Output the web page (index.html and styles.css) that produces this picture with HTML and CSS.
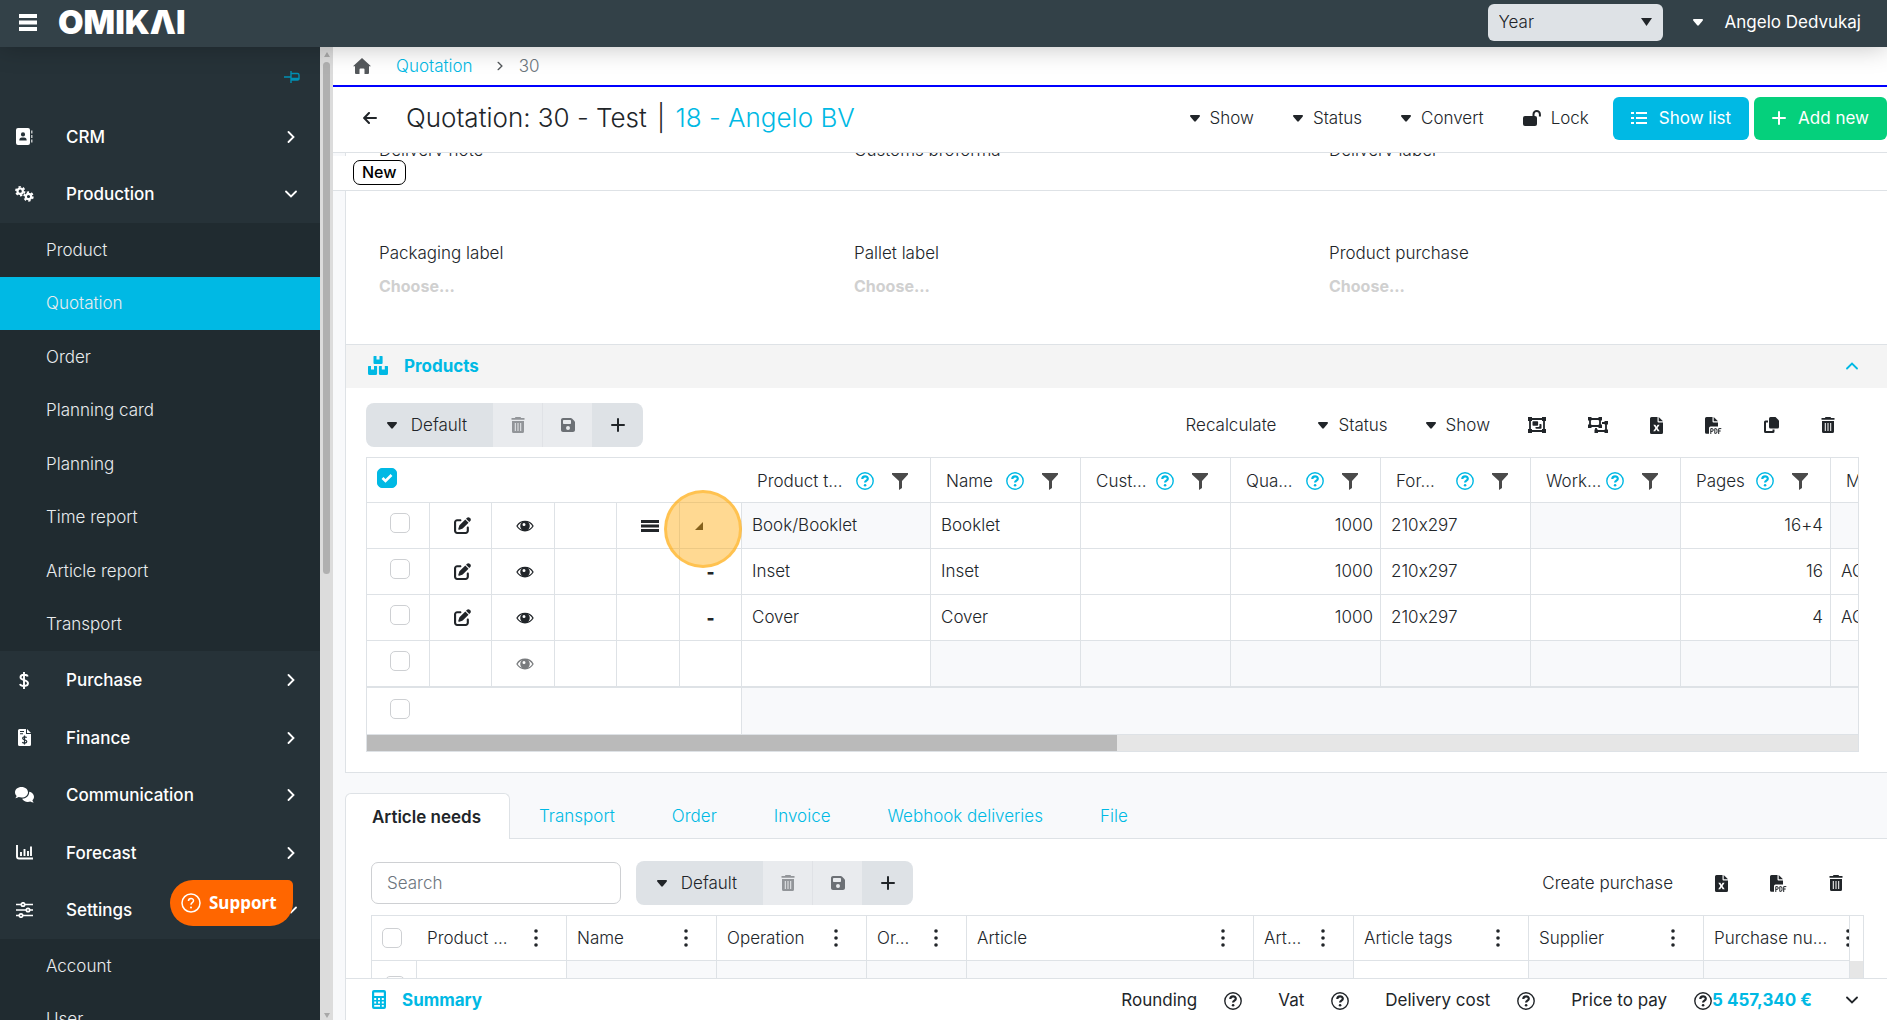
FILE: index.html
```html
<!DOCTYPE html>
<html lang="en">
<head>
  <meta charset="UTF-8">
  <title>Quotation</title>
  <link rel="stylesheet" href="styles.css">
</head>
<body>
  <!-- icon set -->
  <svg class="icon-defs" aria-hidden="true">
    <symbol id="i-caret" viewBox="0 0 10 7"><path d="M1 0h8q1.600 0.400 .6 1.700L5.800 6.300q-.8.800-1.600 0L.4 1.700Q-.6.400 1 0z"/></symbol>
    <symbol id="i-right" viewBox="0 0 8 12"><path d="M1.500 1l5 5-5 5" fill="none" stroke="currentColor" stroke-width="1.800" stroke-linecap="round"/></symbol>
    <symbol id="i-down" viewBox="0 0 12 8"><path d="M1 1.500l5 5 5-5" fill="none" stroke="currentColor" stroke-width="1.800" stroke-linecap="round"/></symbol>
    <symbol id="i-up" viewBox="0 0 12 8"><path d="M1 6.500l5-5 5 5" fill="none" stroke="currentColor" stroke-width="1.800" stroke-linecap="round"/></symbol>
    <symbol id="i-plus" viewBox="0 0 14 14"><path d="M7 1v12M1 7h12" stroke="currentColor" stroke-width="2" stroke-linecap="round"/></symbol>
    <symbol id="i-trash" viewBox="0 0 14 16"><path d="M4.500 0h5l.6 1H13.500v1.800H.5V1h3.400z"/><path fill-rule="evenodd" d="M1 4h12v10.500q0 1.500-1.500 1.500h-9Q1 16 1 14.500zM3.800 6v8h1V6zm2.700 0v8h1V6zm2.700 0v8h1V6z"/></symbol>
    <symbol id="i-save" viewBox="0 0 448 448"><path fill-rule="evenodd" d="M64 0h242c17 0 33 7 45 19l78 78c12 12 19 28 19 45v242c0 35-29 64-64 64H64c-35 0-64-29-64-64V64C0 29 29 0 64 0zm0 96v64c0 18 14 32 32 32h192c18 0 32-14 32-32V96c0-18-14-32-32-32H96c-18 0-32 14-32 32zm160 288a64 64 0 1 0 0-128 64 64 0 1 0 0 128z"/></symbol>
    <symbol id="i-help" viewBox="0 0 18 18"><circle cx="9" cy="9" r="8.200" fill="none" stroke="currentColor" stroke-width="1.400"/><path d="M6.300 7c0-3.500 5.500-3.500 5.500-.3 0 2-2.700 1.900-2.700 3.800" fill="none" stroke="currentColor" stroke-width="2.200"/><circle cx="9.100" cy="13.200" r="1.300"/></symbol>
    <symbol id="i-filter" viewBox="0 0 16 17"><path d="M0 0h16v1.500L10 8v7l-3 2V8L0 1.500z"/></symbol>
    <symbol id="i-edit" viewBox="0 0 512 512"><path d="M471.600 21.700c-21.900-21.900-57.300-21.900-79.200 0L362.300 51.700l97.900 97.900 30.100-30.100c21.900-21.900 21.900-57.300 0-79.200L471.600 21.700zm-299.200 220c-6.100 6.100-10.800 13.600-13.500 21.900l-29.600 88.800c-2.900 8.600-.6 18.100 5.800 24.600s15.900 8.700 24.600 5.800l88.800-29.600c8.200-2.700 15.700-7.400 21.900-13.500L437.700 172.300 339.700 74.300 172.400 241.700zM96 64C43 64 0 107 0 160V416c0 53 43 96 96 96H352c53 0 96-43 96-96V320c0-17.700-14.300-32-32-32s-32 14.300-32 32v96c0 17.700-14.300 32-32 32H96c-17.700 0-32-14.300-32-32V160c0-17.700 14.300-32 32-32h96c17.700 0 32-14.300 32-32s-14.300-32-32-32H96z"/></symbol>
    <symbol id="i-eye" viewBox="0 0 18 12"><path d="M1 6c3.500-6.300 12.500-6.300 16 0-3.500 6.300-12.500 6.300-16 0z" fill="none" stroke="currentColor" stroke-width="1.300"/><path fill-rule="evenodd" d="M9 1.200a4.800 4.800 0 1 0 0 9.600 4.800 4.800 0 0 0 0-9.600zM8 3a1.500 1.500 0 1 1 0 3 1.500 1.500 0 0 1 0-3z"/></symbol>
    <symbol id="i-excel" viewBox="0 0 13 17"><path fill-rule="evenodd" d="M1.500 0H7.500v4.500Q7.500 5.500 8.500 5.500H13v10q0 1.500-1.500 1.500h-10Q0 17 0 15.500v-14Q0 0 1.500 0zM3.300 7.800l2.100 3.200-2.200 3.300h2l1.200-2 1.300 2h2L7.500 11l2.100-3.200h-2l-1.100 1.900-1.200-1.900z"/><path d="M8.700 0L13 4.300H8.700z"/></symbol>
    <symbol id="i-pdf" viewBox="0 0 17 17"><path d="M1.500 0H7.500v4.500Q7.500 5.500 8.500 5.500H13V9.500H5.500Q4 9.500 4 11v5.800H1.500Q0 16.800 0 15.300V1.500Q0 0 1.500 0z"/><path d="M8.700 0L13 4.300H8.700z"/><path d="M5.800 17v-5.400h1.300q1.100 0 1.100 1.400t-1.100 1.400H5.800M9.800 11.600v4.800h1q1.200 0 1.200-1.600v-1.600q0-1.600-1.200-1.600zM13.700 17v-5.400h2.600M13.700 14h2" fill="none" stroke="currentColor" stroke-width="1"/></symbol>
    <symbol id="i-copy" viewBox="0 0 15 16"><path d="M6.500 0h5L15 3.500V10q0 1.500-1.500 1.500h-7Q5 11.500 5 10V1.500Q5 0 6.500 0z"/><path d="M4 4.500H1.500Q1 4.500 1 5v9.500q0 .5.5.5h7.500q.5 0 .5-.5V12.500" fill="none" stroke="currentColor" stroke-width="2"/></symbol>
    <symbol id="i-group" viewBox="0 0 18 16"><path d="M2 2h14v12H2z" fill="none" stroke="currentColor" stroke-width="1.800"/><path d="M0 0h4v4H0zM14 0h4v4h-4zM0 12h4v4H0zM14 12h4v4h-4zM4.500 5q0-.8.800-.8h4q.8 0 .8.800v3q0 .8-.8.8h-4q-.8 0-.8-.8zM11.500 7h1.200q.8 0 .8.800V11q0 .8-.8.800H8.300q-.8 0-.8-.8v-1h2.700q1.300 0 1.300-1.300z"/></symbol>
    <symbol id="i-ungroup" viewBox="0 0 20 16"><path d="M2 2h10v7H2zM14 6h4v8H8v-3" fill="none" stroke="currentColor" stroke-width="1.800"/><path d="M0 0h3.500v3.500H0zM10.500 0H14v3.500h-3.500zM0 7.500h3.500V11H0zM10.500 7.500H14V11h-3.500zM16.500 4H20v3.500h-3.500zM16.500 12.500H20V16h-3.500zM6.500 12.500H10V16H6.500z"/></symbol>
    <symbol id="i-dots" viewBox="0 0 4 18"><circle cx="2" cy="2" r="1.800"/><circle cx="2" cy="9" r="1.800"/><circle cx="2" cy="16" r="1.800"/></symbol>
  </svg>

  <header class="topbar">
    <button class="menu-btn" aria-label="Menu">
      <svg width="18" height="17" viewBox="0 0 18 17"><path d="M0 0h18v4H0zM0 6.500h18v4H0zM0 13h18v4H0z"/></svg>
    </button>
    <a href="#" class="brand" aria-label="OMIKAI">OMIKΛI</a>
    <select class="year" aria-label="Year"><option>Year</option></select>
    <svg class="year-arrow" width="11" height="8" viewBox="0 0 11 8"><path d="M0 0h11L5.500 8z"/></svg>
    <button class="user"><svg width="10" height="7"><use href="#i-caret"/></svg>Angelo Dedvukaj</button>
  </header>

  <div class="layout">
    <nav class="sidebar">
      <div class="pin">
        <svg width="16" height="12" viewBox="0 0 16 12"><path d="M0 6h7M7 0v12M7 2.500h6.500q1.500 0 1.500 1.500v4q0 1-1.500 1H7M7 7.500h8" fill="none" stroke="currentColor" stroke-width="1.400"/></svg>
      </div>
      <a href="#" class="nav-item">
        <svg width="17" height="17" viewBox="0 0 17 17"><path fill-rule="evenodd" d="M2 0h10q2 0 2 2v13q0 2-2 2H2q-2 0-2-2V2Q0 0 2 0zm5 4.300a2.100 2.100 0 1 0 0 4.200 2.100 2.100 0 0 0 0-4.200zM3.300 12.600h7.400q0-3-2.700-3H6q-2.700 0-2.700 3z"/><path d="M15 2.500h1.500v3H15zM15 7h1.500v3H15zM15 11.500h1.500v3H15z" opacity=".7"/></svg>
        <span>CRM</span><svg class="chev" width="8" height="12"><use href="#i-right"/></svg>
      </a>
      <a href="#" class="nav-item">
        <svg width="19" height="16" viewBox="0 0 19 16"><g fill="none" stroke="currentColor"><circle cx="5.200" cy="5.200" r="2.700" stroke-width="2.200"/><circle cx="5.200" cy="5.200" r="4.300" stroke-width="1.800" stroke-dasharray="2.300 2.200"/><circle cx="13.500" cy="10.500" r="2.700" stroke-width="2.200"/><circle cx="13.500" cy="10.500" r="4.300" stroke-width="1.800" stroke-dasharray="2.300 2.200"/></g></svg>
        <span>Production</span><svg class="chev" width="12" height="8"><use href="#i-down"/></svg>
      </a>
      <div class="subnav">
        <a href="#">Product</a>
        <a href="#" class="active">Quotation</a>
        <a href="#">Order</a>
        <a href="#">Planning card</a>
        <a href="#">Planning</a>
        <a href="#">Time report</a>
        <a href="#">Article report</a>
        <a href="#">Transport</a>
      </div>
      <a href="#" class="nav-item">
        <svg width="10" height="17" viewBox="0 0 10 17"><path d="M5 0v17M8.700 4.500C8 2 1.500 2 1.500 5.300c0 3.700 7.500 2 7.500 6 0 3.500-7 3.500-8 .7" fill="none" stroke="currentColor" stroke-width="1.900"/></svg>
        <span>Purchase</span><svg class="chev" width="8" height="12"><use href="#i-right"/></svg>
      </a>
      <a href="#" class="nav-item">
        <svg width="13" height="17" viewBox="0 0 13 17"><path fill-rule="evenodd" d="M1.500 0H8v5h5v10.500q0 1.500-1.500 1.500h-10Q0 17 0 15.500v-14Q0 0 1.500 0zM2 2v1h4V2zm0 2.300v1h3v-1z"/><path d="M9 0l4 4H9z"/><path d="M6.500 6.500v9M8.600 8.700c-1-1.500-4-1-4 .6 0 2 4.200 1.200 4.200 3.300 0 1.800-3.500 2-4.500.5" fill="none" stroke="#263238" stroke-width="1.200"/></svg>
        <span>Finance</span><svg class="chev" width="8" height="12"><use href="#i-right"/></svg>
      </a>
      <a href="#" class="nav-item">
        <svg width="19" height="16" viewBox="0 0 19 16"><path d="M6.500 0C10.300 0 13 2.400 13 5.300s-2.700 5.300-6.500 5.300c-1 0-2-.2-2.800-.5-1 .7-2.100 1.100-3.500 1.100.7-.7 1.200-1.500 1.400-2.300C.5 8 0 6.700 0 5.300 0 2.400 2.700 0 6.500 0z"/><path d="M14.200 4.800c2.700.4 4.800 2.500 4.800 5 0 1.400-.6 2.600-1.600 3.500.2.800.7 1.600 1.400 2.300-1.400 0-2.500-.4-3.500-1.100-3.300 1.100-7-.2-8.200-2.700 4 0 7.300-3 7.100-7z"/></svg>
        <span>Communication</span><svg class="chev" width="8" height="12"><use href="#i-right"/></svg>
      </a>
      <a href="#" class="nav-item">
        <svg width="17" height="15" viewBox="0 0 17 15"><path d="M1 0v11.500q0 2 2 2h14M5 7v4M8.500 4v7M12 6v5M15 1.500V11" fill="none" stroke="currentColor" stroke-width="1.900"/></svg>
        <span>Forecast</span><svg class="chev" width="8" height="12"><use href="#i-right"/></svg>
      </a>
      <a href="#" class="nav-item">
        <svg width="17" height="16" viewBox="0 0 17 16"><g fill="none" stroke="currentColor" stroke-width="1.700"><path d="M0 2.500h5M9 2.500h8M0 8h10M14 8h3M0 13.500h3M7 13.500h10"/><circle cx="7" cy="2.500" r="1.700"/><circle cx="12" cy="8" r="1.700"/><circle cx="5" cy="13.500" r="1.700"/></g></svg>
        <span>Settings</span><svg class="chev" width="12" height="8"><use href="#i-down"/></svg>
      </a>
      <div class="subnav">
        <a href="#">Account</a>
        <a href="#">User</a>
      </div>
    </nav>
    <div class="side-scroll"><i class="arrow-up"></i><i class="thumb"></i><i class="arrow-down"></i></div>

    <main class="main">
      <div class="breadcrumb">
        <svg width="18" height="16" viewBox="0 0 18 16"><path d="M9 0l9 8.200h-2V15q0 1-1 1h-3.500v-4.500q0-1-1-1h-3q-1 0-1 1V16H3q-1 0-1-1V8.200H0z"/></svg>
        <a href="#">Quotation</a>
        <svg class="sep" width="6" height="10" viewBox="0 0 8 12"><use href="#i-right"/></svg>
        <span>30</span>
      </div>

      <div class="titlebar">
        <button class="back" aria-label="Back"><svg width="14" height="12" viewBox="0 0 14 12"><path d="M6 1L1.200 6 6 11M1.500 6H13" fill="none" stroke="currentColor" stroke-width="2" stroke-linecap="round"/></svg></button>
        <h1>Quotation: 30 - Test <span class="bar">|</span> <a href="#">18 - Angelo BV</a></h1>
        <div class="actions">
          <button><svg width="10" height="7"><use href="#i-caret"/></svg>Show</button>
          <button><svg width="10" height="7"><use href="#i-caret"/></svg>Status</button>
          <button><svg width="10" height="7"><use href="#i-caret"/></svg>Convert</button>
          <button><svg width="18" height="16" viewBox="0 0 18 16"><path d="M2 6h10q2 0 2 2v6q0 2-2 2H2q-2 0-2-2V8q0-2 2-2z"/><path d="M10.500 6.500V4.300a3.200 3.200 0 0 1 6.400 0V6.500" fill="none" stroke="currentColor" stroke-width="2"/></svg>Lock</button>
        </div>
        <button class="btn btn-list"><svg width="16" height="14" viewBox="0 0 16 14"><path d="M0 1h3v2H0zM5 1h11v2H5zM0 6h3v2H0zM5 6h11v2H5zM0 11h3v2H0zM5 11h11v2H5z"/></svg>Show list</button>
        <button class="btn btn-add"><svg width="14" height="14"><use href="#i-plus"/></svg>Add new</button>
      </div>

      <div class="peek"><span>Delivery note</span><span>Customs proforma</span><span>Delivery label</span></div>
      <div class="statusbar"><span class="badge">New</span></div>

      <section class="card">
        <div class="fields">
          <div><div class="label">Packaging label</div><div class="choose">Choose...</div></div>
          <div><div class="label">Pallet label</div><div class="choose">Choose...</div></div>
          <div><div class="label">Product purchase</div><div class="choose">Choose...</div></div>
        </div>

        <div class="section-head">
          <svg width="20" height="19" viewBox="0 0 20 19"><path d="M6 0h2.500v3.500h3V0H14q.6 0 .6.600V7q0 1-1 1H6.500q-1 0-1-1V.6Q5.500 0 6 0zM.6 10H3v3.500h3V10h2.500q.6 0 .6.600V17.500q0 1.500-1.500 1.500h-6Q0 19 0 17.500v-7q0-.5.600-.5zM11.500 10h2.300v3.500h3V10h2.600q.6 0 .6.600v6.900q0 1.500-1.500 1.500h-6.100q-1.500 0-1.500-1.500v-7q0-.5.600-.5z"/></svg>
          <h2>Products</h2>
          <button class="toggle" aria-label="Collapse"><svg width="12" height="8"><use href="#i-up"/></svg></button>
        </div>

        <div class="toolbar">
          <div class="group">
            <button class="seg"><svg width="10" height="7"><use href="#i-caret"/></svg>Default</button>
            <button class="seg off" aria-label="Delete view" disabled><svg class="dim" width="14" height="16"><use href="#i-trash"/></svg></button>
            <button class="seg off" aria-label="Save view" disabled><svg width="14" height="14"><use href="#i-save"/></svg></button>
            <button class="seg add" aria-label="Add view"><svg width="14" height="14"><use href="#i-plus"/></svg></button>
          </div>
          <div class="tools">
            <button>Recalculate</button>
            <button><svg width="10" height="7"><use href="#i-caret"/></svg>Status</button>
            <button><svg width="10" height="7"><use href="#i-caret"/></svg>Show</button>
            <button class="ico" aria-label="Group"><svg width="18" height="16"><use href="#i-group"/></svg></button>
            <button class="ico" aria-label="Ungroup"><svg width="20" height="16"><use href="#i-ungroup"/></svg></button>
            <button class="ico" aria-label="Excel"><svg width="13" height="17"><use href="#i-excel"/></svg></button>
            <button class="ico" aria-label="PDF"><svg width="17" height="17"><use href="#i-pdf"/></svg></button>
            <button class="ico" aria-label="Copy"><svg width="15" height="16"><use href="#i-copy"/></svg></button>
            <button class="ico" aria-label="Delete"><svg width="14" height="16"><use href="#i-trash"/></svg></button>
          </div>
        </div>

        <div class="grid">
          <table class="products">
            <colgroup>
              <col class="c-tool"><col class="c-tool"><col class="c-tool"><col class="c-tool"><col class="c-tool"><col class="c-tool">
              <col class="c-type"><col class="c-std"><col class="c-std"><col class="c-std"><col class="c-std"><col class="c-std"><col class="c-std"><col class="c-std">
            </colgroup>
            <thead>
              <tr>
                <th colspan="6" class="all"><input type="checkbox" aria-label="Select all" checked></th>
                <th><div class="th"><span>Product t...</span><svg class="help" width="18" height="18"><use href="#i-help"/></svg><svg class="flt" width="16" height="17"><use href="#i-filter"/></svg></div></th>
                <th><div class="th"><span>Name</span><svg class="help" width="18" height="18"><use href="#i-help"/></svg><svg class="flt" width="16" height="17"><use href="#i-filter"/></svg></div></th>
                <th><div class="th"><span>Cust...</span><svg class="help" width="18" height="18"><use href="#i-help"/></svg><svg class="flt" width="16" height="17"><use href="#i-filter"/></svg></div></th>
                <th><div class="th"><span>Qua...</span><svg class="help" width="18" height="18"><use href="#i-help"/></svg><svg class="flt" width="16" height="17"><use href="#i-filter"/></svg></div></th>
                <th><div class="th"><span>For...</span><svg class="help" width="18" height="18"><use href="#i-help"/></svg><svg class="flt" width="16" height="17"><use href="#i-filter"/></svg></div></th>
                <th><div class="th"><span>Work...</span><svg class="help" width="18" height="18"><use href="#i-help"/></svg><svg class="flt" width="16" height="17"><use href="#i-filter"/></svg></div></th>
                <th><div class="th"><span>Pages</span><svg class="help" width="18" height="18"><use href="#i-help"/></svg><svg class="flt" width="16" height="17"><use href="#i-filter"/></svg></div></th>
                <th><div class="th"><span>M</span></div></th>
              </tr>
            </thead>
            <tbody>
              <tr>
                <td class="tool pick"><input type="checkbox" aria-label="Select Booklet"></td>
                <td class="tool"><svg width="17" height="17"><use href="#i-edit"/></svg></td>
                <td class="tool"><svg width="18" height="12"><use href="#i-eye"/></svg></td>
                <td></td>
                <td class="tool"><svg width="18" height="12" viewBox="0 0 18 12"><path d="M0 0h18v3H0zM0 4.500h18v3H0zM0 9h18v3H0z"/></svg></td>
                <td class="tool fold"><svg width="8" height="8" viewBox="0 0 8 8"><path d="M8 0v8H0z"/></svg><i class="click-mark"></i></td>
                <td class="shade">Book/Booklet</td><td>Booklet</td><td></td><td class="num">1000</td><td>210x297</td><td class="shade"></td><td class="num">16+4</td><td class="shade"></td>
              </tr>
              <tr>
                <td class="tool pick"><input type="checkbox" aria-label="Select Inset"></td>
                <td class="tool"><svg width="17" height="17"><use href="#i-edit"/></svg></td>
                <td class="tool"><svg width="18" height="12"><use href="#i-eye"/></svg></td>
                <td></td><td></td>
                <td class="tool leaf">-</td>
                <td>Inset</td><td>Inset</td><td></td><td class="num">1000</td><td>210x297</td><td></td><td class="num">16</td><td>AC</td>
              </tr>
              <tr>
                <td class="tool pick"><input type="checkbox" aria-label="Select Cover"></td>
                <td class="tool"><svg width="17" height="17"><use href="#i-edit"/></svg></td>
                <td class="tool"><svg width="18" height="12"><use href="#i-eye"/></svg></td>
                <td></td><td></td>
                <td class="tool leaf">-</td>
                <td>Cover</td><td>Cover</td><td></td><td class="num">1000</td><td>210x297</td><td></td><td class="num">4</td><td>AC</td>
              </tr>
              <tr class="new-row">
                <td class="tool pick"><input type="checkbox" aria-label="Select new row"></td>
                <td></td>
                <td class="tool"><svg class="faded" width="18" height="12"><use href="#i-eye"/></svg></td>
                <td></td><td></td><td></td><td></td>
                <td class="shade"></td><td class="shade"></td><td class="shade"></td><td class="shade"></td><td class="shade"></td><td class="shade"></td><td class="shade"></td>
              </tr>
              <tr class="pinned">
                <td colspan="6" class="pick"><input type="checkbox" aria-label="Select pinned row"></td>
                <td colspan="8" class="shade"></td>
              </tr>
            </tbody>
          </table>
          <div class="hscroll"><div class="hthumb"></div></div>
        </div>
      </section>

      <div class="tabs">
        <a href="#" class="current">Article needs</a>
        <a href="#">Transport</a>
        <a href="#">Order</a>
        <a href="#">Invoice</a>
        <a href="#">Webhook deliveries</a>
        <a href="#">File</a>
      </div>

      <section class="card needs">
        <div class="toolbar">
          <input class="search" type="text" placeholder="Search" aria-label="Search">
          <div class="group">
            <button class="seg"><svg width="10" height="7"><use href="#i-caret"/></svg>Default</button>
            <button class="seg off" aria-label="Delete view" disabled><svg class="dim" width="14" height="16"><use href="#i-trash"/></svg></button>
            <button class="seg off" aria-label="Save view" disabled><svg width="14" height="14"><use href="#i-save"/></svg></button>
            <button class="seg add" aria-label="Add view"><svg width="14" height="14"><use href="#i-plus"/></svg></button>
          </div>
          <div class="tools">
            <button>Create purchase</button>
            <button class="ico" aria-label="Excel"><svg width="13" height="17"><use href="#i-excel"/></svg></button>
            <button class="ico" aria-label="PDF"><svg width="17" height="17"><use href="#i-pdf"/></svg></button>
            <button class="ico" aria-label="Delete"><svg width="14" height="16"><use href="#i-trash"/></svg></button>
          </div>
        </div>

        <div class="grid needs-grid">
          <div class="scroller">
            <table class="articles">
              <colgroup>
                <col class="a-pick"><col class="a-150"><col class="a-150"><col class="a-150"><col class="a-100"><col class="a-287"><col class="a-100"><col class="a-175"><col class="a-175"><col class="a-175">
              </colgroup>
              <thead>
                <tr>
                  <th class="open"><input type="checkbox" aria-label="Select all articles"></th>
                  <th><div class="th"><span>Product ...</span><svg width="4" height="18"><use href="#i-dots"/></svg></div></th>
                  <th><div class="th"><span>Name</span><svg width="4" height="18"><use href="#i-dots"/></svg></div></th>
                  <th><div class="th"><span>Operation</span><svg width="4" height="18"><use href="#i-dots"/></svg></div></th>
                  <th><div class="th"><span>Or...</span><svg width="4" height="18"><use href="#i-dots"/></svg></div></th>
                  <th><div class="th"><span>Article</span><svg width="4" height="18"><use href="#i-dots"/></svg></div></th>
                  <th><div class="th"><span>Art...</span><svg width="4" height="18"><use href="#i-dots"/></svg></div></th>
                  <th><div class="th"><span>Article tags</span><svg width="4" height="18"><use href="#i-dots"/></svg></div></th>
                  <th><div class="th"><span>Supplier</span><svg width="4" height="18"><use href="#i-dots"/></svg></div></th>
                  <th><div class="th"><span>Purchase nu...</span><svg width="4" height="18"><use href="#i-dots"/></svg></div></th>
                </tr>
              </thead>
              <tbody>
                <tr>
                  <td class="pick"><input type="checkbox" aria-label="Select article"></td>
                  <td></td><td class="shade"></td><td class="shade"></td><td class="shade"></td><td class="shade"></td><td class="shade"></td><td></td><td class="shade"></td><td class="shade"></td>
                </tr>
              </tbody>
            </table>
          </div>
          <div class="vscroll"></div>
        </div>
      </section>

      <footer class="summary">
        <svg class="calc" width="14" height="19" viewBox="0 0 14 19"><path fill-rule="evenodd" d="M2 0h10q2 0 2 2v15q0 2-2 2H2q-2 0-2-2V2Q0 0 2 0zm.2 2.500V6h9.600V2.500zM2.200 8v2h2V8zm3.800 0v2h2V8zm3.800 0v2h2V8zM2.200 11.500v2h2v-2zm3.800 0v2h2v-2zm3.800 0v2h2v-2zM2.200 15v1.800h5.800V15zm7.600 0v1.800h2V15z"/></svg>
        <h2>Summary</h2>
        <div class="totals">
          <span>Rounding<svg width="18" height="18"><use href="#i-help"/></svg></span>
          <span>Vat<svg width="18" height="18"><use href="#i-help"/></svg></span>
          <span>Delivery cost<svg width="18" height="18"><use href="#i-help"/></svg></span>
          <span>Price to pay<svg width="18" height="18"><use href="#i-help"/></svg></span>
          <strong>5 457,340 €</strong>
        </div>
        <button class="toggle" aria-label="Expand"><svg width="12" height="8"><use href="#i-down"/></svg></button>
      </footer>
    </main>
  </div>

  <button class="support">
    <svg width="20" height="20" viewBox="0 0 20 20"><circle cx="10" cy="10" r="9" fill="none" stroke="currentColor" stroke-width="1.500"/><path d="M7.500 8c0-3.300 5-3.300 5-.3 0 2-2.500 2-2.500 4" fill="none" stroke="currentColor" stroke-width="1.500"/><circle cx="10" cy="14.500" r="1"/></svg>
    Support
  </button>
</body>
</html>
```
FILE: styles.css
```css
* {
  box-sizing: border-box;
}

body {
  margin: 0;
  height: 100vh;
  overflow: hidden;
  display: flex;
  flex-direction: column;
  font-family: Inter, sans-serif;
  font-feature-settings: "calt" 0;
  font-size: 17px;
  line-height: 24px;
  font-weight: 300;
  color: #212529;
  background: #f8f9fb;
}

a {
  color: #00b9e4;
  text-decoration: none;
}

button,
input,
select {
  font: inherit;
  color: inherit;
}

button {
  display: inline-flex;
  align-items: center;
  padding: 0;
  border: none;
  background: none;
  white-space: nowrap;
  cursor: pointer;
}

svg {
  flex: none;
  display: block;
  fill: currentColor;
}

h1,
h2 {
  margin: 0;
}

.icon-defs {
  display: none;
}

/* top bar */
.topbar {
  position: relative;
  z-index: 3;
  flex: none;
  display: flex;
  align-items: center;
  height: 47px;
  padding: 0 26px 3px 19px;
  color: white;
  background: #334148;
  box-shadow: 0 0 26px rgba(0, 0, 0, 0.25);
}

.brand {
  margin-left: 21px;
  font-size: 33px;
  font-weight: 900;
  color: white;
}

.year {
  appearance: none;
  width: 175px;
  height: 37px;
  margin-left: auto;
  padding: 0 11px;
  border: none;
  border-radius: 6px;
  color: #212529;
  background: #dee2e6;
}

.year-arrow {
  margin-left: -22px;
  color: #212529;
  pointer-events: none;
}

.user {
  gap: 22px;
  margin-left: 41px;
  font-weight: 400;
}

/* sidebar */
.layout {
  flex: 1;
  min-height: 0;
  display: flex;
}

.sidebar {
  flex: none;
  width: 320px;
  overflow: hidden;
  color: white;
  background: #263238;
}

.pin {
  display: flex;
  justify-content: flex-end;
  height: 61px;
  padding: 24px 20px 0 0;
  color: #0090b4;
}

.nav-item {
  display: grid;
  grid-template-columns: 48px 1fr 26px;
  align-items: center;
  height: 58px;
  padding-right: 16px;
  font-weight: 500;
  color: white;
}

.nav-item:nth-child(even) {
  height: 57px;
}

.nav-item svg {
  justify-self: center;
}

.nav-item span {
  padding-left: 18px;
}

.subnav {
  background: #202b30;
}

.subnav a {
  display: block;
  padding-left: 46px;
  line-height: 53px;
  color: #e9ecee;
}

.subnav a:nth-child(odd) {
  line-height: 54px;
}

.subnav .active {
  background: #00b9e4;
}

.side-scroll {
  flex: none;
  display: flex;
  flex-direction: column;
  align-items: center;
  width: 13px;
  padding: 5px 0 2px;
  background: #dcdcdc;
}

.arrow-up,
.arrow-down {
  border: 3px solid transparent;
}

.arrow-up {
  border-top: none;
  border-bottom: 5px solid #a8a8a8;
}

.arrow-down {
  margin-top: auto;
  border-bottom: none;
  border-top: 5px solid #a8a8a8;
}

.thumb {
  width: 7px;
  height: 53%;
  margin-top: 5px;
  border-radius: 4px;
  background: #b0b0b0;
}

.support {
  position: absolute;
  z-index: 4;
  left: 170px;
  bottom: 94px;
  gap: 8px;
  height: 46px;
  padding: 0 16px 0 11px;
  border-radius: 23px 5px 23px 23px;
  font-family: "Noto Sans", sans-serif;
  font-weight: 700;
  color: white;
  background: #ff6600;
}

/* main column */
.main {
  position: relative;
  flex: 1;
  min-width: 0;
  overflow: hidden;
}

.breadcrumb {
  display: flex;
  align-items: center;
  height: 40px;
  padding: 0 20px;
  border-bottom: 2px solid #0000ff;
  color: #6c757d;
  background: white;
}

.breadcrumb svg {
  color: #55595c;
}

.breadcrumb a {
  margin-left: 25px;
}

.breadcrumb .sep {
  margin: 0 16px 0 24px;
}

.titlebar {
  display: flex;
  align-items: center;
  height: 66px;
  padding-bottom: 3px;
  border-bottom: 1px solid #dee2e6;
  background: white;
}

.back {
  width: 73px;
  padding-left: 30px;
}

.titlebar h1 {
  font-size: 26px;
  font-weight: 300;
}

.bar {
  margin: 0 3px;
}

.actions {
  display: flex;
  gap: 39px;
  margin: 0 24px 0 auto;
}

.actions button {
  gap: 10px;
}

.btn {
  gap: 12px;
  height: 43px;
  padding: 0 18px;
  border-radius: 6px;
  font-weight: 400;
  color: white;
}

.btn-list {
  margin-right: 5px;
  background: #00b9e4;
}

.btn-add {
  background: #05d07c;
}

/* fields scrolled under the status bar */
.peek {
  display: grid;
  grid-template-columns: repeat(3, 1fr);
  align-content: end;
  height: 3px;
  margin-left: 12px;
  padding: 0 83px 0 33px;
  overflow: hidden;
  border-left: 1px solid #dee2e6;
  line-height: 12px;
  background: white;
}

.statusbar {
  display: flex;
  align-items: center;
  height: 35px;
  padding: 0 0 2px 20px;
  border-bottom: 1px solid #dee2e6;
  background: white;
}

.badge {
  padding: 0 8px;
  border: 1px solid black;
  border-radius: 7px;
  font-size: 16px;
  line-height: 23px;
  font-weight: 500;
  color: black;
}

.card {
  margin-left: 12px;
  border-left: 1px solid #dee2e6;
  border-bottom: 1px solid #dee2e6;
  background: white;
}

.fields {
  display: grid;
  grid-template-columns: repeat(3, 1fr);
  height: 153px;
  padding: 50px 83px 0 33px;
}

.choose {
  margin-top: 9px;
  font-size: 16px;
  font-weight: 700;
  color: #d0d0d0;
}

.section-head {
  display: flex;
  align-items: center;
  height: 44px;
  padding: 0 29px 2px 22px;
  border-top: 1px solid #dee2e6;
  color: #00b9e4;
  background: #f4f4f4;
}

.section-head h2,
.summary h2 {
  margin-left: 16px;
  font-size: 17px;
  font-weight: 700;
}

.toggle {
  margin-left: auto;
}

.toolbar {
  display: flex;
  align-items: center;
  padding: 15px 52px 10px 20px;
}

.group {
  display: flex;
  border-radius: 8px;
  overflow: hidden;
  background: #dee2e6;
}

.seg {
  justify-content: center;
  gap: 14px;
  width: 49px;
  height: 44px;
}

.seg:first-child {
  width: 127px;
  padding-right: 5px;
}

.seg.add {
  width: 51px;
}

.seg.off {
  color: #6c7075;
  background: #e9ebee;
}

.seg.off + .off {
  width: 50px;
  border-left: 1px solid #e0e2e6;
}

.dim {
  color: #929599;
}

.tools {
  display: flex;
  align-items: center;
  gap: 42px;
  margin-left: auto;
}

.tools button {
  gap: 10px;
}

.tools button + button:not(.ico) {
  margin-right: -4px;
}

/* data grids */
.grid {
  margin: 0 28px 20px 20px;
  border: 1px solid #dee2e6;
  overflow: hidden;
}

table {
  table-layout: fixed;
  width: 0;
  border-spacing: 0;
}

.c-tool {
  width: 62px;
}

.c-tool:nth-child(odd) {
  width: 63px;
}

.c-type {
  width: 189px;
}

.c-std,
.a-150 {
  width: 150px;
}

th,
td {
  height: 46px;
  padding: 0 7px 1px 10px;
  border-right: 1px solid #dee2e6;
  border-bottom: 1px solid #dee2e6;
  font-weight: 300;
  text-align: left;
  white-space: nowrap;
  overflow: hidden;
}

th {
  height: 45px;
}

.th {
  display: flex;
  align-items: center;
}

.th span {
  flex: 1;
  min-width: 0;
}

.products th {
  padding: 2px 22px 0 15px;
}

.products .all {
  padding: 0 0 4px 10px;
  border-right: none;
}

.help {
  color: #00b9e4;
}

.flt {
  margin-left: 18px;
  color: #4a4a4a;
}

.num {
  text-align: right;
}

.shade {
  background: #f8f9fb;
}

td.tool {
  padding: 0 0 0 3px;
  text-align: center;
}

.tool svg {
  margin: 0 auto;
}

td.pick {
  padding: 0 0 5px 23px;
  text-align: left;
}

td.leaf {
  padding: 0;
  font-weight: 900;
}

td.fold {
  position: relative;
  padding: 0;
  overflow: visible;
}

.fold svg {
  margin-left: 15px;
}

.click-mark {
  position: absolute;
  z-index: 2;
  left: -16px;
  top: -13px;
  width: 78px;
  height: 78px;
  border: 3px solid rgba(255, 171, 13, 0.5);
  border-radius: 50%;
  background: rgba(255, 171, 13, 0.45);
}

.faded {
  opacity: 0.6;
}

.new-row td {
  height: 47px;
  border-bottom-width: 2px;
}

.pinned td {
  height: 47px;
}

input[type="checkbox"] {
  appearance: none;
  display: block;
  width: 20px;
  height: 20px;
  margin: 0;
  border: 1px solid #ced0d3;
  border-radius: 5px;
  background: white;
}

input[type="checkbox"]:checked {
  border-color: #00b9e4;
  background: #00b9e4 url("data:image/svg+xml,%3Csvg xmlns='http://www.w3.org/2000/svg' viewBox='0 0 20 20'%3E%3Cpath d='M5.500 10l3 3 6-6' fill='none' stroke='white' stroke-width='2.600'/%3E%3C/svg%3E") center / 20px;
}

.hscroll {
  height: 16px;
  background: #e6e6e6;
}

.hthumb {
  width: calc(50% + 4px);
  height: 16px;
  background: #bababa;
}

/* tabs */
.tabs {
  display: flex;
  gap: 1px;
  height: 46px;
  margin: 20px 0 0 12px;
  border-bottom: 1px solid #dee2e6;
}

.tabs a {
  height: 46px;
  padding: 0 28px;
  line-height: 46px;
}

.tabs .current {
  padding: 0 28px 0 26px;
  border: 1px solid #dee2e6;
  border-bottom: none;
  border-radius: 6px 6px 0 0;
  font-weight: 600;
  color: #212529;
  background: white;
}

.needs .toolbar {
  padding: 22px 44px 10px 25px;
}

.search {
  width: 250px;
  height: 42px;
  margin-right: 15px;
  padding: 0 15px;
  border: 1px solid #ced0d3;
  border-radius: 7px;
}

.search::placeholder {
  color: #6c757d;
}

.needs-grid {
  display: flex;
  margin: 0 23px 0 25px;
}

.scroller {
  flex: 1;
  min-width: 0;
  overflow: hidden;
  border-right: 1px solid #dee2e6;
}

.vscroll {
  width: 13px;
  padding-top: 45px;
  background: #e6e6e6 content-box;
}

.articles th {
  padding: 0 28px 0 10px;
}

.articles th.open {
  padding: 0 0 1px 10px;
  border-right: none;
}

.articles td.pick {
  padding: 4px 0 0 13px;
}

.a-pick {
  width: 45px;
}

.a-100 {
  width: 100px;
}

.a-287 {
  width: 287px;
}

.a-175 {
  width: 175px;
}

/* footer */
.summary {
  position: absolute;
  left: 12px;
  right: 0;
  bottom: 0;
  display: flex;
  align-items: center;
  height: 42px;
  padding: 0 29px 0 26px;
  border-top: 1px solid #dee2e6;
  border-left: 1px solid #dee2e6;
  background: white;
}

.calc,
.summary h2 {
  color: #00b9e4;
}

.totals {
  display: flex;
  margin-left: auto;
  font-weight: 400;
}

.totals span {
  display: flex;
  align-items: center;
  gap: 27px;
  margin-left: 36px;
}

.totals svg {
  margin-top: 3px;
}

.totals strong {
  font-weight: 700;
  color: #00b9e4;
}

.summary .toggle {
  margin-left: 34px;
}
```
